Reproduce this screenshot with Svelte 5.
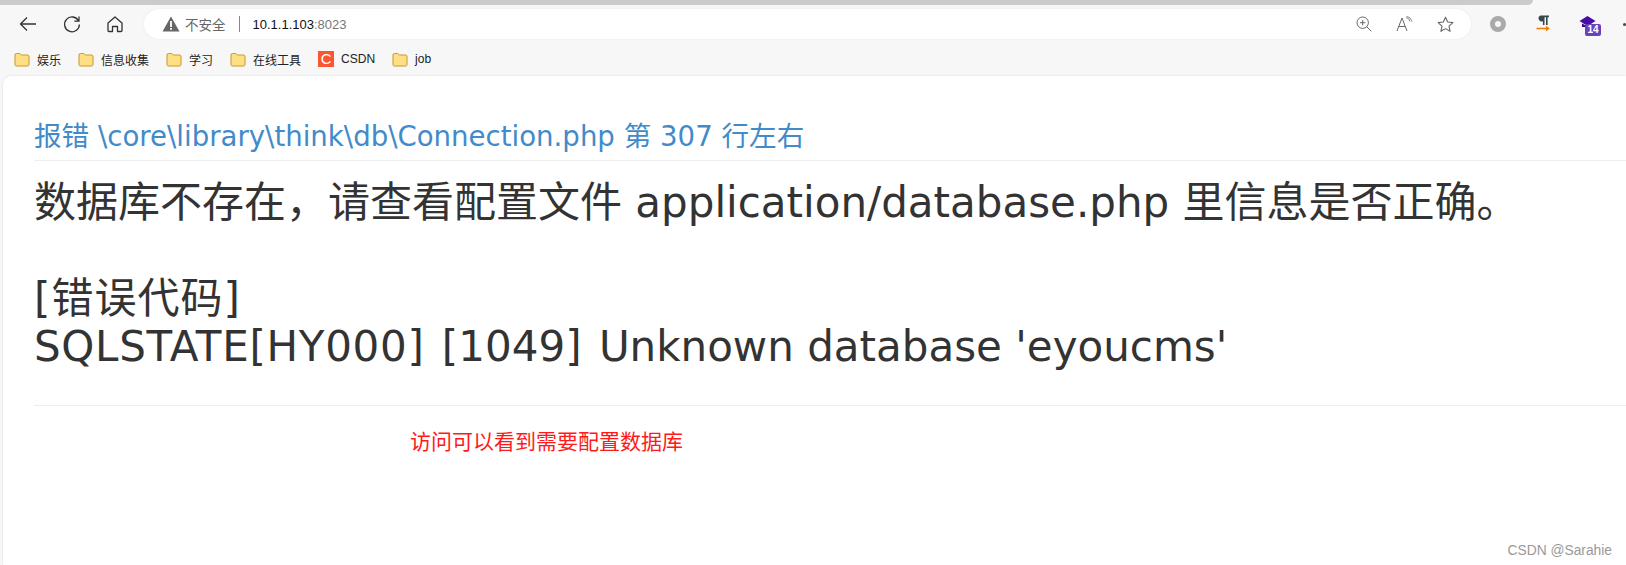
<script>
  const bookmarks = [
    { name: "娱乐" },
    { name: "信息收集" },
    { name: "学习" },
    { name: "在线工具" },
    { name: "CSDN", csdn: true },
    { name: "job" },
  ];
</script>

<div class="browser">
  <div class="tabstrip"><div class="scroll"></div></div>

  <div class="toolbar">
    <button class="nav" aria-label="back">
      <svg width="20" height="20" viewBox="0 0 20 20"><path d="M18 10H2.500M9 3.500 2.500 10 9 16.500" fill="none" stroke="#333" stroke-width="1.300"/></svg>
    </button>
    <button class="nav" aria-label="reload">
      <svg width="20" height="20" viewBox="0 0 20 20"><path d="M16.600 7A7.400 7.400 0 1 0 17.400 10.500M17 2.500V7.200H12.300" fill="none" stroke="#333" stroke-width="1.300"/></svg>
    </button>
    <button class="nav home" aria-label="home">
      <svg width="18" height="18" viewBox="0 0 18 18"><path d="M2 8 9 2l7 6v7.500a1 1 0 0 1-1 1h-3.500v-5h-5v5H3a1 1 0 0 1-1-1z" fill="none" stroke="#333" stroke-width="1.300" stroke-linejoin="round"/></svg>
    </button>

    <div class="address">
      <svg class="warn" width="18" height="16" viewBox="0 0 18 16"><path d="M9 0.500 17.500 15.500H0.500z" fill="#666"/><rect x="8.100" y="5" width="1.800" height="6" fill="#fff"/><rect x="8.100" y="12" width="1.800" height="1.800" fill="#fff"/></svg>
      <span class="insecure">不安全</span>
      <span class="sep"></span>
      <span class="url">10.1.1.103<span class="port">:8023</span></span>
      <div class="addr-icons">
        <svg width="16" height="16" viewBox="0 0 16 16"><circle cx="6.700" cy="6.700" r="5.700" fill="none" stroke="#666" stroke-width="1"/><path d="M4 6.700h5.400M6.700 4v5.400M10.800 10.800l4.500 4.500" fill="none" stroke="#666" stroke-width="1"/></svg>
        <svg width="17" height="16" viewBox="0 0 17 16"><path d="M1 15 6 2l5 13M2.800 10.500h6.400" fill="none" stroke="#666" stroke-width="1"/><path d="M10 1.500a5 5 0 0 1 4 4M10.500 .2a7 7 0 0 1 5.500 5.300" fill="none" stroke="#888" stroke-width="1"/></svg>
        <svg width="17" height="17" viewBox="0 0 17 17"><path d="M8.500 1.200l2.200 4.800 5.200.6-3.900 3.500 1.100 5.200-4.600-2.700-4.600 2.700 1.100-5.200L1.100 6.600l5.200-.6z" fill="none" stroke="#666" stroke-width="1.100" stroke-linejoin="round"/></svg>
      </div>
    </div>

    <div class="extensions">
      <span class="ring"></span>
      <svg class="para" width="14" height="17" viewBox="0 0 14 17"><path d="M4.500 0.500h8.500v1.800h-1.400V10H10V2.300H8.500V10H6.900V6.200A2.900 2.900 0 0 1 4.500 0.500z" fill="#37474f"/><path d="M0.500 13.500h10" stroke="#f57c00" stroke-width="1.600"/><path d="M10 10.800 13.800 13.500 10 16.200z" fill="#f57c00"/></svg>
      <span class="grad">
        <svg width="17" height="15" viewBox="0 0 17 15"><path d="M8.500 1 16.500 6 8.500 11 .5 6z" fill="#4a0ca8"/><path d="M3 8.500v3.500h10V8.500L8.500 11.500z" fill="#2f0a78"/></svg>
        <span class="badge">14</span>
      </span>
      <span class="dot"></span>
    </div>
  </div>

  <div class="bookmarks">
    {#each bookmarks as b}
      <div class="bookmark">
        {#if b.csdn}
          <span class="csdn-icon">C</span>
        {:else}
          <svg width="16" height="15" viewBox="0 0 16 15"><path d="M1 3a1.500 1.500 0 0 1 1.500-1.500h3.200L7.500 3h6A1.500 1.500 0 0 1 15 4.500v8a1.500 1.500 0 0 1-1.500 1.500h-11A1.500 1.500 0 0 1 1 12.500z" fill="#ffdf85" stroke="#c8981e" stroke-width="1"/></svg>
        {/if}
        <span>{b.name}</span>
      </div>
    {/each}
  </div>

  <div class="page">
    <h2>报错 \core\library\think\db\Connection.php 第 307 行左右</h2>
    <div class="message">
      数据库不存在，请查看配置文件 application/database.php 里信息是否正确。<br /><br />
      <span class="wide">[错误代码]</span><br />
      <span class="sql"><span class="wider">SQLSTATE[HY000]</span> [1049]{" "}</span>Unknown database 'eyoucms'
    </div>
    <hr />
    <p class="note">访问可以看到需要配置数据库</p>
    <span class="watermark">CSDN @Sarahie</span>
  </div>
</div>

<style>
  :global(body) {
    margin: 0;
    overflow: hidden;
  }
  .browser {
    position: relative;
    width: 1626px;
    height: 565px;
    overflow: hidden;
    background: #f7f7f7;
    font-family: "Liberation Sans", "Noto Sans CJK SC", sans-serif;
  }
  .tabstrip {
    height: 5px;
  }
  .scroll {
    width: 1533px;
    height: 5px;
    background: #cbcbcb;
    border-radius: 0 0 6px 0;
  }
  .toolbar {
    display: flex;
    align-items: center;
    height: 30px;
    margin-top: 4px;
    padding-left: 6px;
  }
  .nav {
    width: 44px;
    height: 30px;
    padding: 0;
    border: 0;
    background: none;
    display: flex;
    align-items: center;
    justify-content: center;
  }
  .home {
    margin-left: -1px;
  }
  .address {
    display: flex;
    align-items: center;
    width: 1327px;
    height: 30px;
    box-sizing: border-box;
    margin-left: 7px;
    padding-left: 18px;
    background: #fff;
    border-radius: 15px;
    box-shadow: 0 0 2px rgba(0, 0, 0, 0.08);
    font-size: 12px;
  }
  .insecure {
    margin-left: 5px;
    color: #666;
    font-size: 13.500px;
  }
  .sep {
    width: 1px;
    height: 16px;
    margin: 0 13px 0 13px;
    background: #888;
  }
  .url {
    color: #111;
    font-size: 13px;
  }
  .port {
    color: #777;
  }
  .addr-icons {
    margin-left: auto;
    margin-right: 17px;
    display: flex;
    align-items: center;
    gap: 24px;
  }
  .extensions {
    display: flex;
    align-items: center;
    margin-left: 19px;
  }
  .ring {
    width: 16px;
    height: 16px;
    box-sizing: border-box;
    border: 5px solid #aaa;
    border-radius: 50%;
    margin-right: 30px;
  }
  .para {
    margin-top: -1px;
  }
  .grad {
    position: relative;
    display: block;
    width: 17px;
    height: 15px;
    margin-left: 29px;
    margin-top: -4px;
  }
  .badge {
    position: absolute;
    left: 6px;
    top: 9px;
    width: 16px;
    height: 12px;
    background: #6b3fc0;
    border-radius: 2px;
    color: #fff;
    font-size: 10px;
    font-weight: bold;
    line-height: 12px;
    text-align: center;
  }
  .dot {
    width: 3px;
    height: 3px;
    margin-left: 27px;
    background: #444;
    border-radius: 50%;
  }
  .bookmarks {
    display: flex;
    align-items: center;
    height: 28px;
    margin-top: 6px;
    padding-left: 14px;
    gap: 17px;
    font-size: 12px;
    color: #222;
  }
  .bookmark {
    display: flex;
    align-items: center;
    gap: 7px;
  }
  .csdn-icon {
    width: 16px;
    height: 16px;
    background: #fc5531;
    color: #fff;
    font-size: 15px;
    line-height: 16px;
    text-align: center;
  }
  .page {
    position: absolute;
    left: 3px;
    top: 76px;
    right: 0;
    bottom: 0;
    box-sizing: border-box;
    padding: 46px 0 0 31px;
    background: #fff;
    border-top-left-radius: 8px;
    box-shadow: 0 0 2px rgba(0, 0, 0, 0.15);
    font-family: "DejaVu Sans", "Noto Sans CJK SC", sans-serif;
  }
  h2 {
    margin: 0;
    padding-bottom: 8px;
    border-bottom: 1px solid #eee;
    color: #428bca;
    font-size: 27.600px;
    font-weight: normal;
    line-height: 30px;
  }
  .message {
    margin-top: 18px;
    color: #333;
    font-size: 42px;
    line-height: 48px;
  }
  .wide {
    letter-spacing: 1px;
  }
  .sql {
    word-spacing: 4px;
  }
  .wider {
    letter-spacing: 0.700px;
  }
  hr {
    margin: 34px 0 0;
    border: 0;
    border-top: 1px solid #eee;
  }
  .note {
    margin: 23px 0 0 376px;
    color: #ff1a1a;
    font-size: 21px;
    line-height: 26px;
  }
  .watermark {
    position: absolute;
    right: 14px;
    bottom: 7px;
    color: #999;
    font-family: "Liberation Sans", sans-serif;
    font-size: 13.800px;
  }
</style>
